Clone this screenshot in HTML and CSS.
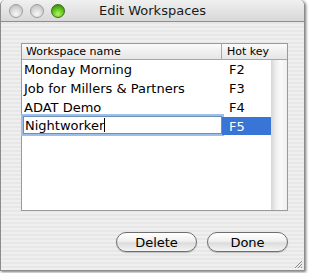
FILE: index.html
```html
<!DOCTYPE html>
<html lang="en">
<head>
    <meta charset="UTF-8">
    <title>Edit Workspaces</title>
    <link rel="stylesheet" href="styles.css">
</head>
<body>
    <div class="window">
        <!-- Title bar -->
        <div class="titlebar">
            <div class="lights">
                <span class="light"></span>
                <span class="light"></span>
                <span class="light zoom"></span>
            </div>
            <div class="title">Edit Workspaces</div>
        </div>

        <!-- Content -->
        <div class="content">
            <div class="table">
                <div class="list">
                    <div class="row head">
                        <div class="cell name">Workspace name</div>
                        <div class="cell key">Hot key</div>
                    </div>
                    <div class="row">
                        <div class="cell name">Monday Morning</div>
                        <div class="cell key">F2</div>
                    </div>
                    <div class="row">
                        <div class="cell name">Job for Millers &amp; Partners</div>
                        <div class="cell key">F3</div>
                    </div>
                    <div class="row">
                        <div class="cell name">ADAT Demo</div>
                        <div class="cell key">F4</div>
                    </div>
                    <div class="row editing">
                        <div class="cell name"><div class="edit">Nightworker<span class="caret"></span></div></div>
                        <div class="cell key selected">F5</div>
                    </div>
                </div>
                <div class="scroll">
                    <div class="corner"></div>
                    <div class="track"></div>
                </div>
            </div>

            <div class="buttons">
                <button class="btn">Delete</button>
                <button class="btn">Done</button>
            </div>
        </div>

        <svg class="grip" width="10" height="10" viewBox="0 0 10 10">
            <path d="M2 9 L9 2 M5 9 L9 5 M8 9 L9 8" stroke="#8a8a8a" stroke-width="1"/>
        </svg>
    </div>
</body>
</html>
```

FILE: styles.css
```css
* {
    margin: 0;
    padding: 0;
    box-sizing: border-box;
}

body {
    font-family: 'DejaVu Sans', 'Liberation Sans', sans-serif;
    background: #ffffff;
    width: 309px;
    height: 273px;
    overflow: hidden;
}

/* Window frame */
.window {
    position: relative;
    width: 305px;
    height: 271px;
    border: 1px solid #8c8c8c;
    border-top: none;
    border-radius: 5px 5px 0 0;
    background: repeating-linear-gradient(180deg, #efefef 0 2px, #e7e7e7 2px 4px);
    box-shadow: 1px 1px 3px rgba(0, 0, 0, 0.55);
    overflow: hidden;
}

/* Title bar */
.titlebar {
    position: relative;
    height: 22px;
    display: flex;
    align-items: center;
    background: linear-gradient(180deg, #f0f0f0 0%, #e4e4e4 50%, #d8d8d8 100%);
    border-bottom: 1px solid #8e8e8e;
    border-radius: 5px 5px 0 0;
}

.lights {
    display: flex;
    gap: 7px;
    padding-left: 8px;
}

.light {
    width: 14px;
    height: 14px;
    border-radius: 50%;
    border: 1px solid #9c9c9c;
    background: radial-gradient(circle at 50% 75%, #f8f8f8 0%, #d4d4d4 55%, #b8b8b8 100%);
}

.light.zoom {
    border-color: #3d6a1a;
    background: radial-gradient(circle at 50% 75%, #b8f46a 0%, #5ec21b 50%, #2e7a06 100%);
}

.title {
    position: absolute;
    left: 0;
    right: 0;
    text-align: center;
    font-size: 13px;
    color: #1a1a1a;
}

/* Content */
.content {
    padding: 21px 16px 0 20px;
}

.table {
    display: flex;
    height: 168px;
    border: 1px solid #9a9a9a;
    background: #ffffff;
}

.list {
    flex: 1;
}

.row {
    display: grid;
    grid-template-columns: 200px 1fr;
    height: 19px;
    font-size: 13px;
    line-height: 20px;
    color: #000000;
}

.row.head {
    height: 16px;
    line-height: 15px;
    font-size: 11px;
    background: linear-gradient(180deg, #fbfbfb 0%, #efefef 50%, #e6e6e6 100%);
    border-bottom: 1px solid #a8a8a8;
}

.cell {
    padding-left: 2px;
    white-space: nowrap;
    overflow: hidden;
}

.head .cell {
    padding-left: 4px;
}

.head .name {
    border-right: 1px solid #a8a8a8;
}

.head .key {
    padding-left: 5px;
}

.key {
    padding-left: 7px;
}

.cell.selected {
    background: #3875d7;
    color: #ffffff;
    height: 18px;
}

/* Inline editor */
.editing .name {
    overflow: visible;
    padding: 0;
}

.edit {
    height: 18px;
    margin: -1px 0 0 1px;
    line-height: 17px;
    padding-left: 1px;
    background: #ffffff;
    border: 1px solid #6f8fb8;
    box-shadow: 0 0 0 2px #9cbfe9;
}

.caret {
    display: inline-block;
    width: 1px;
    height: 14px;
    background: #000000;
    vertical-align: -2px;
}

/* Scroll track */
.scroll {
    width: 16px;
    display: flex;
    flex-direction: column;
}

.corner {
    height: 16px;
    background: linear-gradient(180deg, #fbfbfb 0%, #efefef 50%, #e6e6e6 100%);
    border-bottom: 1px solid #a8a8a8;
}

.track {
    flex: 1;
    background: linear-gradient(90deg, #d6d6d6 0%, #eeeeee 30%, #fafafa 60%, #f0f0f0 100%);
}

/* Buttons */
.buttons {
    display: flex;
    justify-content: flex-end;
    gap: 10px;
    margin-top: 21px;
}

.btn {
    width: 81px;
    height: 20px;
    font-family: inherit;
    font-size: 13px;
    color: #000000;
    border: 1px solid #6e6e6e;
    border-radius: 10px;
    background: linear-gradient(180deg, #ffffff 0%, #f0f0f0 45%, #dcdcdc 55%, #f4f4f4 100%);
    box-shadow: 0 1px 1px rgba(0, 0, 0, 0.2);
}

.grip {
    position: absolute;
    right: 1px;
    bottom: 1px;
}
```
